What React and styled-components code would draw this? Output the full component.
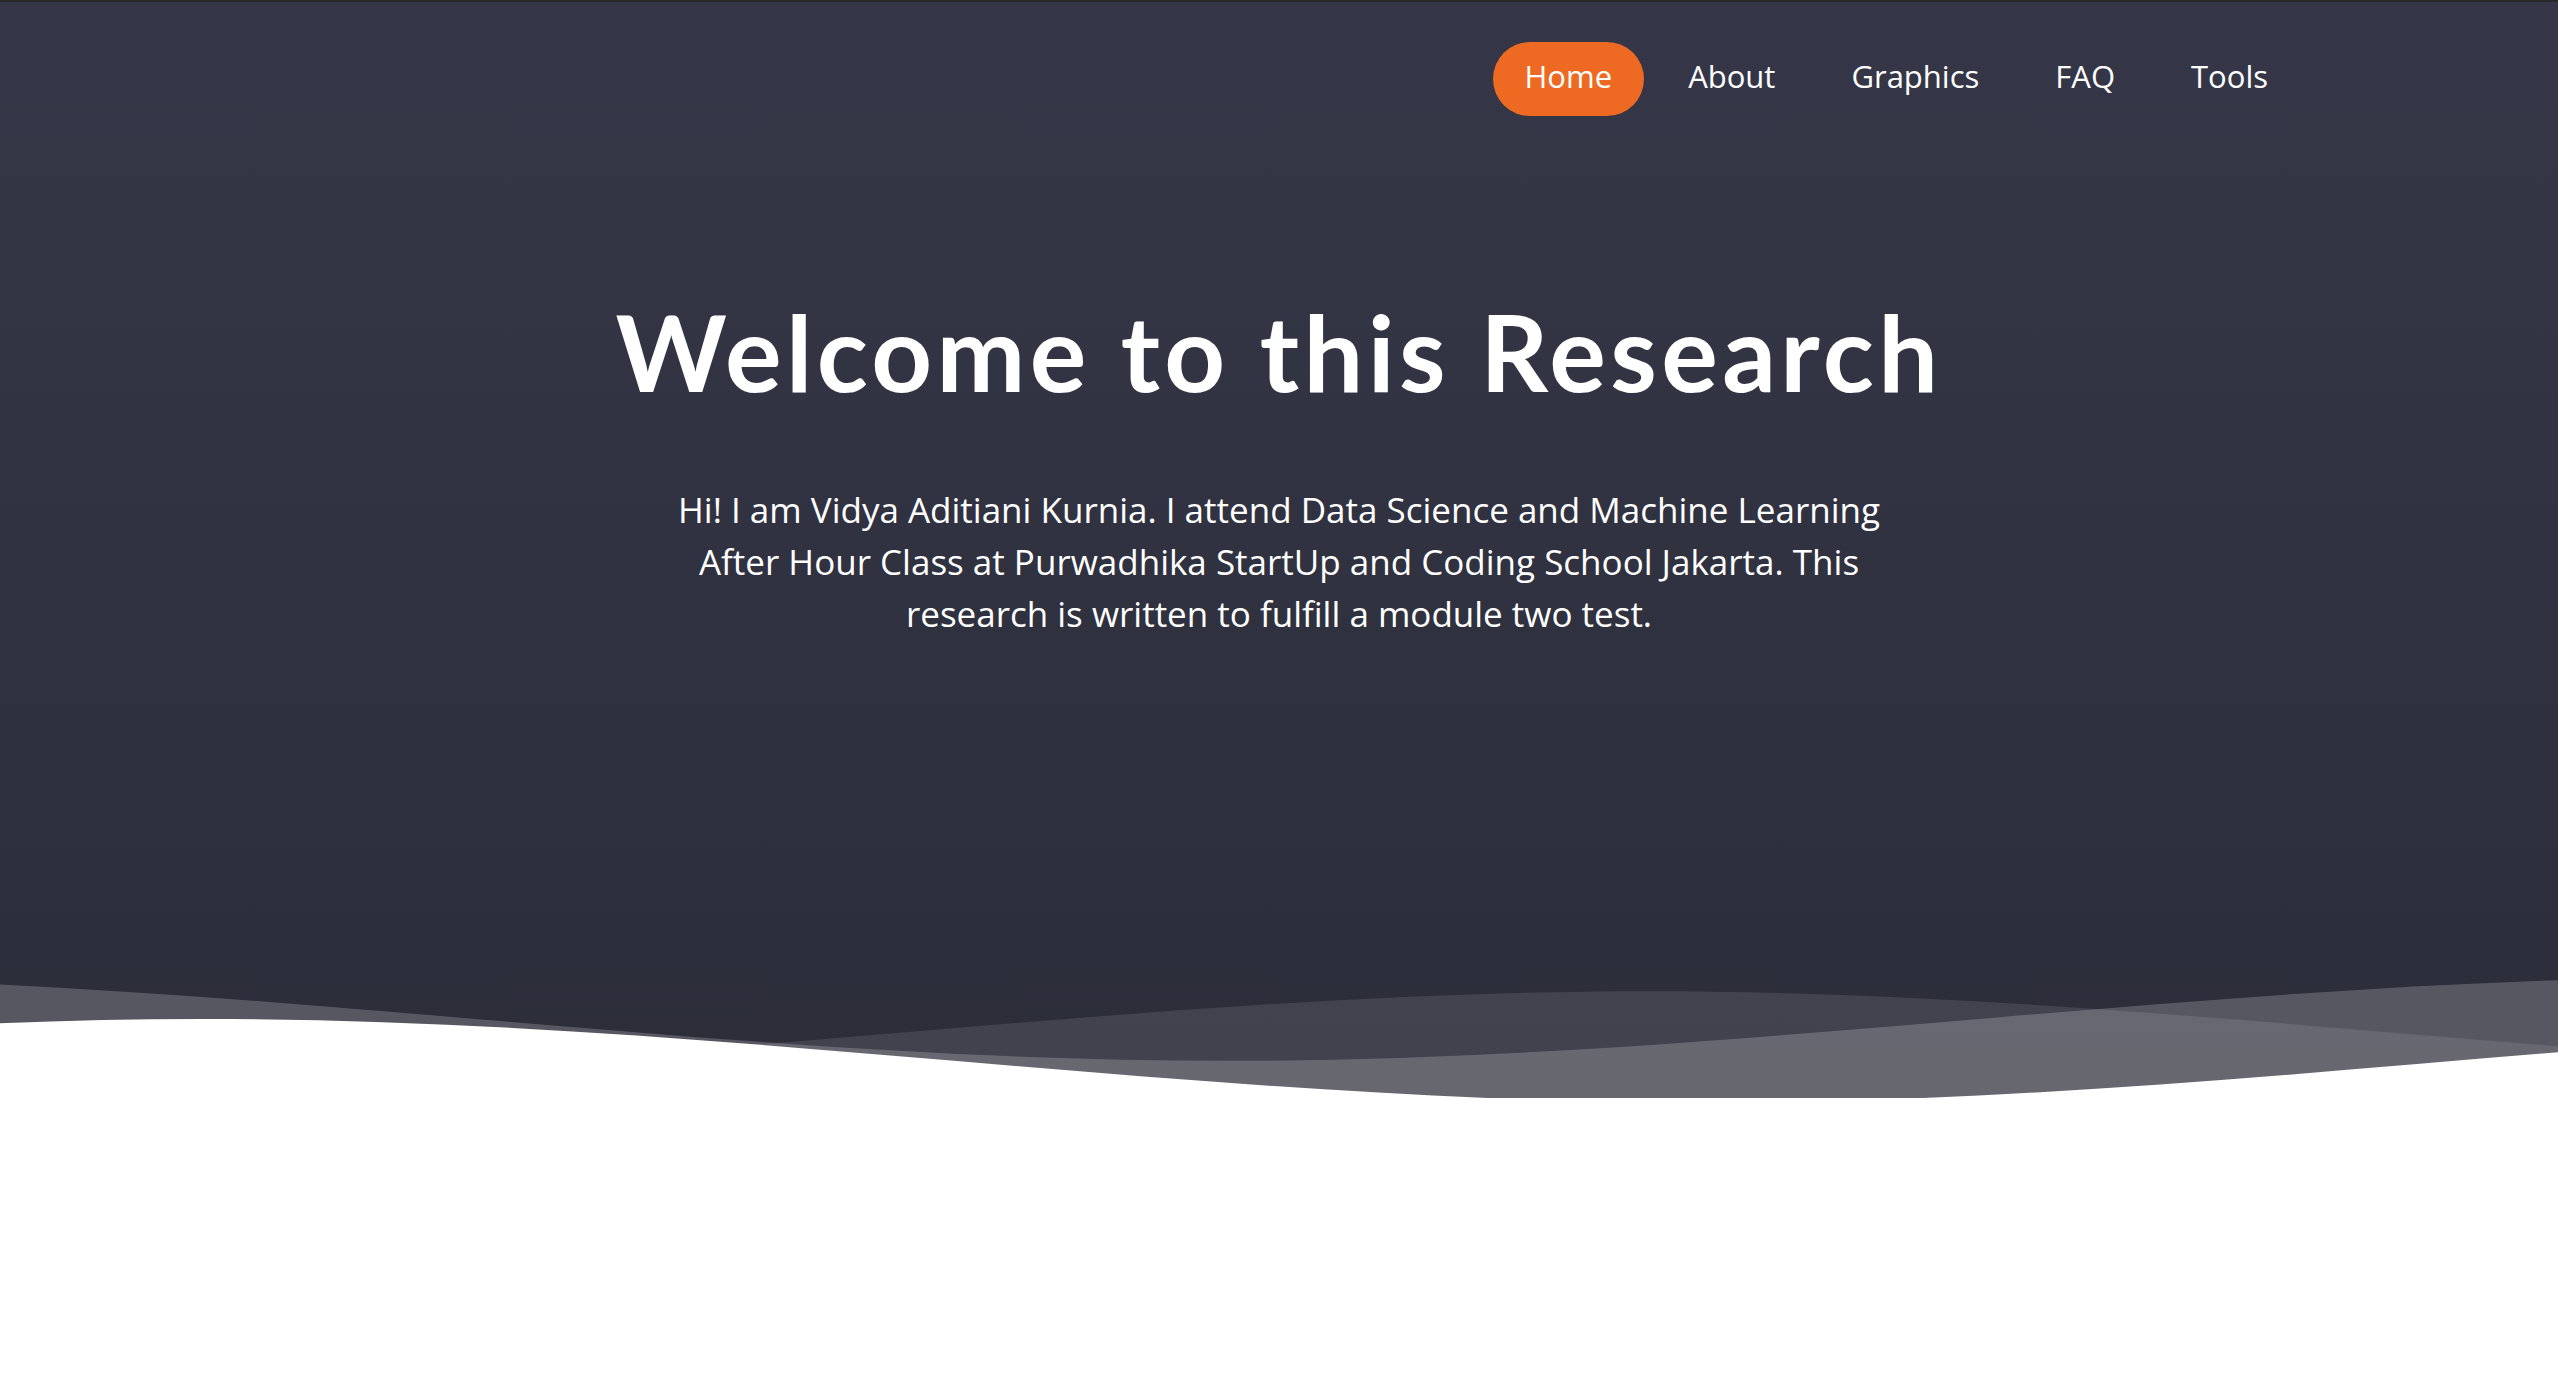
import React from "react";
import styled, { createGlobalStyle } from "styled-components";

const GlobalStyle = createGlobalStyle`
  html, body {
    margin: 0;
    padding: 0;
    background: #fff;
  }
  body {
    font-family: "Open Sans", "Noto Sans", sans-serif;
  }
`;

const Hero = styled.section`
  box-sizing: border-box;
  min-height: 1098px;
  border-top: 2px solid #28282a;
  background: linear-gradient(180deg, #353748 0%, #2c2d39 100%);
  display: flex;
  flex-direction: column;
  color: #fff;
`;

const Nav = styled.nav`
  display: flex;
  justify-content: flex-end;
  gap: 12px;
  padding: 40px 258px 0 0;
`;

const NavItem = styled.a`
  box-sizing: border-box;
  display: flex;
  align-items: center;
  height: 74px;
  padding: 0 32px 6px;
  border-radius: 37px;
  font-size: 31px;
  line-height: 1;
  color: #fff;
  text-decoration: none;
  background: ${(p) => (p.$active ? "#ee6a22" : "transparent")};
  cursor: pointer;
`;

const Content = styled.div`
  display: flex;
  flex-direction: column;
  align-items: center;
  text-align: center;
  padding-top: 172px;
`;

const Title = styled.h1`
  margin: 0;
  font-family: Lato, "Open Sans", sans-serif;
  font-weight: 700;
  font-size: 106px;
  line-height: 1.2;
  letter-spacing: 4.4px;
`;

const Lead = styled.p`
  margin: 69px 0 0;
  max-width: 1250px;
  font-size: 35px;
  line-height: 52px;
`;

const Waves = styled.svg`
  display: block;
  width: 100%;
  height: 130px;
  margin-top: auto;
`;

const links = ["Home", "About", "Graphics", "FAQ", "Tools"];

const App = () => {
  return (
    <>
      <GlobalStyle />
      <Hero>
        <Nav>
          {links.map((l, i) => (
            <NavItem key={l} $active={i === 0}>
              {l}
            </NavItem>
          ))}
        </Nav>
        <Content>
          <Title>Welcome to this Research</Title>
          <Lead>
            Hi! I am Vidya Aditiani Kurnia. I attend Data Science and Machine
            Learning After Hour Class at Purwadhika StartUp and Coding School
            Jakarta. This research is written to fulfill a module two test.
          </Lead>
        </Content>
        <Waves viewBox="0 24 150 28" preserveAspectRatio="none">
          <defs>
            <path
              id="wave-path"
              d="M-160 44c30 0 58-18 88-18s 58 18 88 18 58-18 88-18 58 18 88 18 v44h-352z"
            />
          </defs>
          <use href="#wave-path" x="-7.4" y="3" fill="rgba(255,255,255,0.1)" />
          <use href="#wave-path" x="56" y="0" fill="rgba(255,255,255,0.2)" />
          <use href="#wave-path" x="84" y="9" fill="#fff" />
        </Waves>
      </Hero>
    </>
  );
};

export default App;
